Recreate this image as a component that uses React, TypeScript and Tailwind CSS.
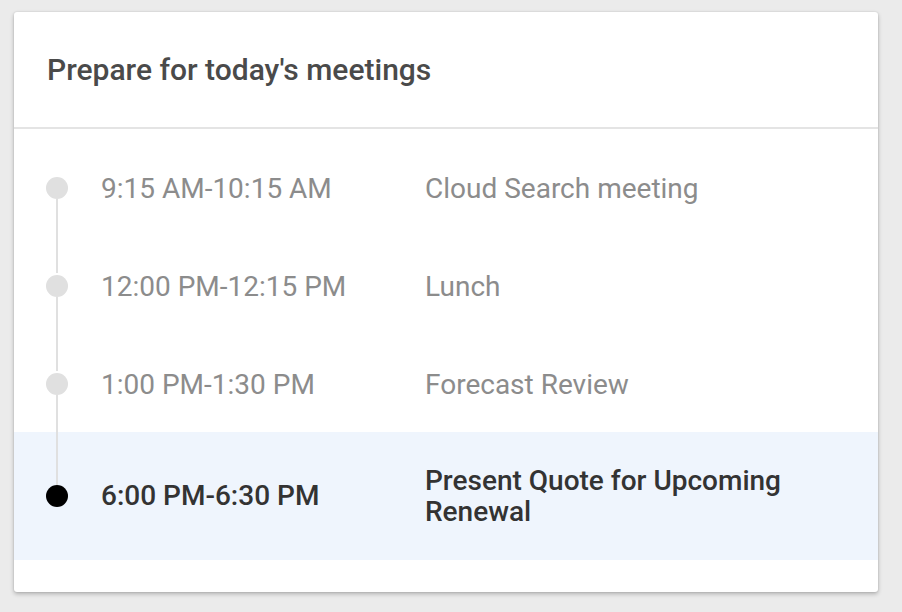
const meetings = [
  { time: "9:15 AM-10:15 AM", title: "Cloud Search meeting" },
  { time: "12:00 PM-12:15 PM", title: "Lunch" },
  { time: "1:00 PM-1:30 PM", title: "Forecast Review" },
  { time: "6:00 PM-6:30 PM", title: "Present Quote for Upcoming Renewal", current: true },
];

const App = () => {
  return (
    <div className="min-h-screen bg-[#ebebeb] pt-[12px] pl-[14px] font-['Roboto',sans-serif]">
      <div className="w-[864px] h-[580px] bg-white rounded-[3px] shadow-[0_2px_4px_rgba(0,0,0,0.25),0_0_2px_rgba(0,0,0,0.12)] overflow-hidden">
        {/* Header */}
        <div className="h-[117px] border-b-2 border-[#e4e4e4] flex items-center pl-[33px] pb-[1px]">
          <h2 className="text-[30px] font-medium text-[#4a4a4a]">Prepare for today's meetings</h2>
        </div>

        {/* Timeline */}
        <div className="pt-[9px]">
          {meetings.map((m, i) => {
            const first = i === 0;
            const last = i === meetings.length - 1;
            return (
              <div
                key={m.time}
                className={m.current ? "flex items-center pl-[32px] bg-[#eff5fd]" : "flex items-center pl-[32px]"}
              >
                <div className="self-stretch w-[22px] flex flex-col items-center">
                  <div className={first ? "flex-1 w-[2px]" : "flex-1 w-[2px] bg-[#e0e0e0]"} />
                  <div
                    className={
                      m.current
                        ? "w-[22px] h-[22px] rounded-full bg-black"
                        : "w-[22px] h-[22px] mt-[2px] rounded-full bg-[#e0e0e0]"
                    }
                  />
                  <div className={last ? "flex-1 w-[2px]" : "flex-1 w-[2px] bg-[#e0e0e0]"} />
                </div>
                <div
                  className={
                    m.current
                      ? "w-[324px] ml-[33px] text-[28px] leading-[32px] font-medium text-[#333]"
                      : "w-[324px] ml-[33px] pt-[4px] text-[28px] leading-[32px] text-[#8c8c8c]"
                  }
                >
                  {m.time}
                </div>
                <div
                  className={
                    m.current
                      ? "w-[400px] py-[33px] text-[28px] leading-[31px] font-medium text-[#333]"
                      : "w-[400px] pt-[35px] pb-[31px] text-[28px] leading-[32px] text-[#8c8c8c]"
                  }
                >
                  {m.title}
                </div>
              </div>
            );
          })}
        </div>
      </div>
    </div>
  );
};

export default App;
